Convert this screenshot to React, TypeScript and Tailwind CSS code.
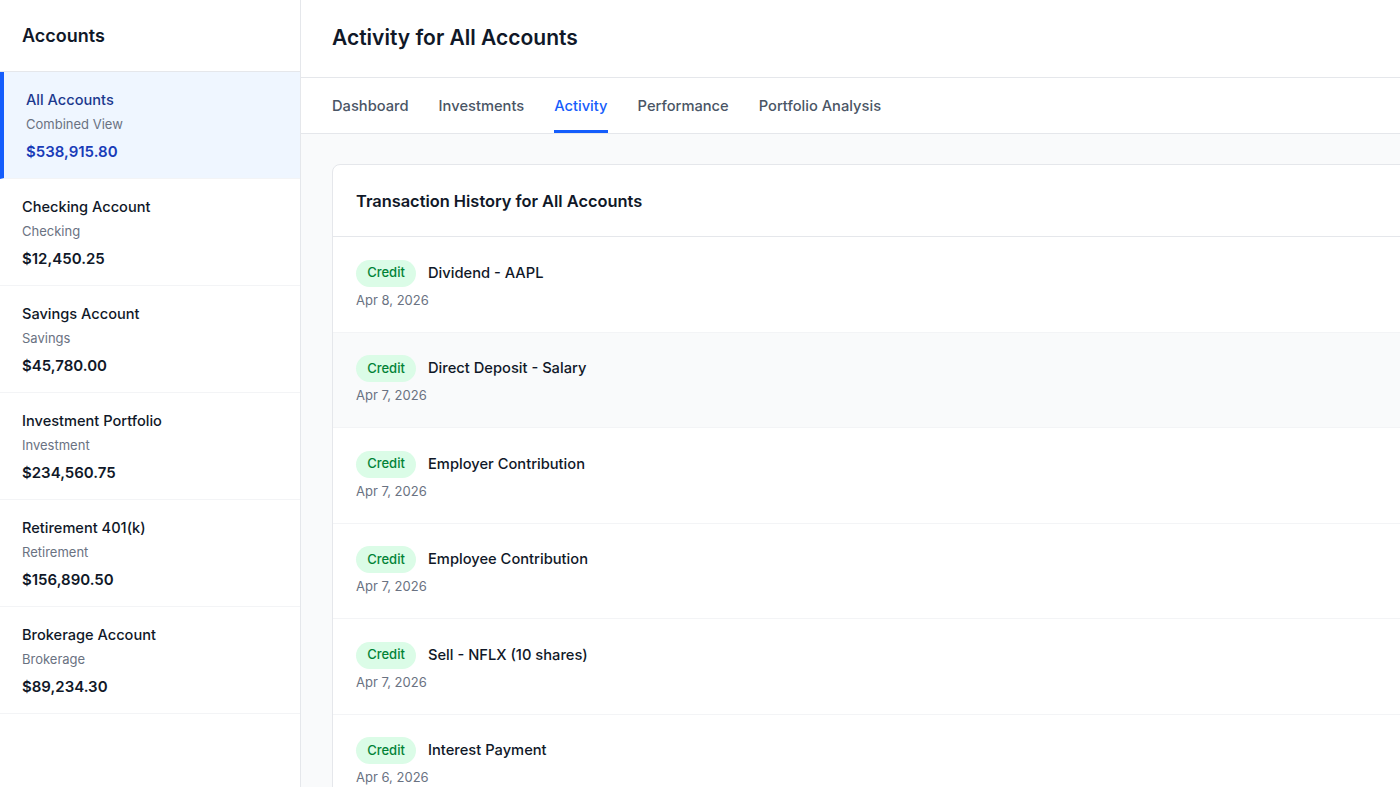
import React from "react";

const accounts = [
  { name: "All Accounts", type: "Combined View", amount: "$538,915.80", active: true },
  { name: "Checking Account", type: "Checking", amount: "$12,450.25" },
  { name: "Savings Account", type: "Savings", amount: "$45,780.00" },
  { name: "Investment Portfolio", type: "Investment", amount: "$234,560.75" },
  { name: "Retirement 401(k)", type: "Retirement", amount: "$156,890.50" },
  { name: "Brokerage Account", type: "Brokerage", amount: "$89,234.30" },
];

const tabs = ["Dashboard", "Investments", "Activity", "Performance", "Portfolio Analysis"];

const txs = [
  { title: "Dividend - AAPL", date: "Apr 8, 2026" },
  { title: "Direct Deposit - Salary", date: "Apr 7, 2026", hover: true },
  { title: "Employer Contribution", date: "Apr 7, 2026" },
  { title: "Employee Contribution", date: "Apr 7, 2026" },
  { title: "Sell - NFLX (10 shares)", date: "Apr 7, 2026" },
  { title: "Interest Payment", date: "Apr 6, 2026" },
  { title: "Buy - MSFT (5 shares)", date: "Apr 5, 2026" },
];

export default function App() {
  return (
    <div className="flex h-[787px] w-full overflow-hidden bg-white font-['Inter',sans-serif] text-gray-900">
      <aside className="flex w-[301px] shrink-0 flex-col border-r border-gray-200 bg-white">
        <div className="flex h-[72px] items-center border-b border-gray-200 px-[22px]">
          <h2 className="text-[18px] font-semibold leading-7 text-gray-900">Accounts</h2>
        </div>
        {accounts.map((a) =>
          a.active ? (
            <div key={a.name} className="flex h-[107px] flex-col border-b border-gray-100 border-l-4 border-l-blue-600 bg-blue-50 pl-[22px] pt-[17px]">
              <div className="text-[14.6px] font-medium leading-[22px] text-blue-900">{a.name}</div>
              <div className="mt-[3px] text-[13px] leading-5 text-gray-500">{a.type}</div>
              <div className="mt-[6px] text-[15px] font-semibold leading-6 text-blue-800">{a.amount}</div>
            </div>
          ) : (
            <div key={a.name} className="flex h-[107px] flex-col border-b border-gray-100 px-[22px] pt-[17px]">
              <div className="text-[14.6px] font-medium leading-[22px] text-gray-900">{a.name}</div>
              <div className="mt-[3px] text-[13px] leading-5 text-gray-500">{a.type}</div>
              <div className="mt-[6px] text-[15px] font-semibold leading-6 text-gray-900">{a.amount}</div>
            </div>
          )
        )}
      </aside>

      <main className="flex min-w-0 flex-1 flex-col">
        <header className="flex h-[78px] shrink-0 items-center border-b border-gray-200 px-[31px] pb-[2px]">
          <h1 className="text-[21px] font-semibold leading-8 text-gray-900">Activity for All Accounts</h1>
        </header>
        <nav className="flex h-[56px] shrink-0 items-stretch gap-[30px] border-b border-gray-200 px-[31px]">
          {tabs.map((t) =>
            t === "Activity" ? (
              <div key={t} className="flex items-center border-b-[3px] border-blue-600 pt-[5px] text-[14.7px] font-medium text-blue-600">
                {t}
              </div>
            ) : (
              <div key={t} className="flex items-center border-b-[3px] border-transparent pt-[5px] text-[14.7px] font-medium text-gray-600">
                {t}
              </div>
            )
          )}
        </nav>
        <div className="flex-1 overflow-hidden bg-gray-50 px-[31px] pt-[30px]">
          <div className="w-[1200px] rounded-lg border border-gray-200 bg-white">
            <div className="flex h-[72px] items-center border-b border-gray-200 px-[23px] pt-[2px]">
              <h3 className="text-[16.4px] font-semibold text-gray-900">Transaction History for All Accounts</h3>
            </div>
            {txs.map((t, i) => (
              <div
                key={i}
                className={
                  t.hover
                    ? "flex flex-col border-b border-gray-100 bg-gray-50 px-[23px] pb-[22px] pt-[22.5px]"
                    : "flex flex-col border-b border-gray-100 px-[23px] pb-[22px] pt-[22.5px]"
                }
              >
                <div className="flex items-center gap-3">
                  <span className="flex h-[27px] w-[60px] items-center justify-center rounded-full bg-green-100 text-[13px] font-medium text-green-700">
                    Credit
                  </span>
                  <span className="text-[14.7px] font-medium text-gray-900">{t.title}</span>
                </div>
                <div className="mt-[3px] text-[13px] leading-5 text-gray-500">{t.date}</div>
              </div>
            ))}
          </div>
        </div>
      </main>
    </div>
  );
}
